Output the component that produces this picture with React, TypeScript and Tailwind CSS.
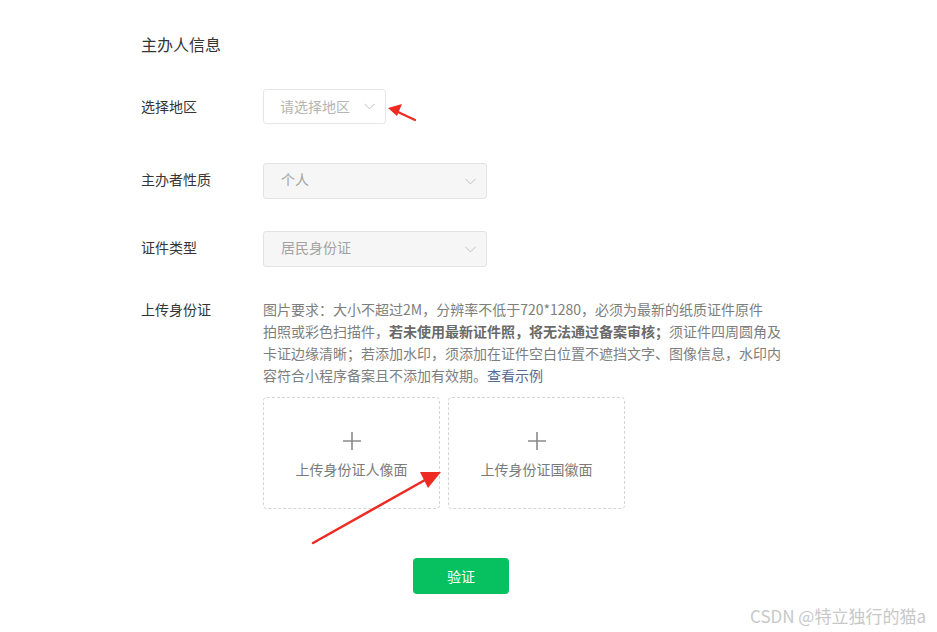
import { ChevronDown } from "lucide-react";

const font = { fontFamily: '"Noto Sans CJK SC", "Noto Sans", sans-serif' };

function Chevron() {
  return <ChevronDown size={19} strokeWidth={1.1} className="text-[#b8b8b8]" />;
}

function UploadBox({ label }: { label: string }) {
  return (
    <div className="flex h-[112px] w-[177px] flex-col items-center justify-center rounded border border-dashed border-[#d5d5d5]">
      <svg width="20" height="20" viewBox="0 0 20 20" className="mt-[4px]">
        <path d="M10 1v18M1 10h18" stroke="#8a8a8a" strokeWidth="1.6" />
      </svg>
      <span className="mt-[8px] text-[14px] text-[#7a7a7a]">{label}</span>
    </div>
  );
}

export default function App() {
  return (
    <div className="relative h-[632px] w-[937px] overflow-hidden bg-white" style={font}>
      <div className="pl-[141px] pt-[33px] text-[14px] text-[#353535]">
        <h2 className="text-[16px] leading-[22px] font-normal">主办人信息</h2>

        {/* Region */}
        <div className="mt-[34px] flex items-center">
          <span className="w-[122px]">选择地区</span>
          <div className="flex h-[35px] w-[123px] items-center justify-between rounded-[3px] border border-[#e6e6e6] bg-white pl-[16px] pr-[6px]">
            <span className="text-[#b5b5b5]">请选择地区</span>
            <Chevron />
          </div>
        </div>

        {/* Type */}
        <div className="mt-[39px] flex items-center">
          <span className="w-[122px] -mt-[3px]">主办者性质</span>
          <div className="flex h-[36px] w-[224px] items-center justify-between rounded-[3px] border border-[#e3e3e3] bg-[#f5f6f5] pl-[17px] pr-[6px]">
            <span className="-mt-[3px] text-[#a3a3a3]">个人</span>
            <Chevron />
          </div>
        </div>

        {/* ID type */}
        <div className="mt-[32px] flex items-center">
          <span className="w-[122px] -mt-[3px]">证件类型</span>
          <div className="flex h-[36px] w-[224px] items-center justify-between rounded-[3px] border border-[#e3e3e3] bg-[#f5f6f5] pl-[17px] pr-[6px]">
            <span className="-mt-[3px] text-[#a3a3a3]">居民身份证</span>
            <Chevron />
          </div>
        </div>

        {/* Upload */}
        <div className="mt-[31px] flex items-start">
          <span className="w-[122px] leading-[22px]">上传身份证</span>
          <div>
            <p className="whitespace-nowrap text-[14px] leading-[22px] text-[#7e7e7e]">
              图片要求：大小不超过2M，分辨率不低于720*1280，必须为最新的纸质证件原件
              <br />
              拍照或彩色扫描件，<b className="font-bold text-[#6a6a6a]">若未使用最新证件照，将无法通过备案审核；</b>须证件四周圆角及
              <br />
              卡证边缘清晰；若添加水印，须添加在证件空白位置不遮挡文字、图像信息，水印内
              <br />
              容符合小程序备案且不添加有效期。<span className="text-[#576b95]">查看示例</span>
            </p>
            <div className="mt-[11px] flex gap-[8px]">
              <UploadBox label="上传身份证人像面" />
              <UploadBox label="上传身份证国徽面" />
            </div>
          </div>
        </div>

        <div className="mt-[49px] pl-[272px]">
          <button className="h-[36px] w-[96px] rounded-[4px] bg-[#07c160] text-[14px] text-white">
            验证
          </button>
        </div>
      </div>

      {/* annotation arrows */}
      <svg className="pointer-events-none absolute left-0 top-0" width="937" height="632">
        <path d="M415 120 L398 112" stroke="#ee2b22" strokeWidth="2.2" strokeLinecap="round" />
        <path d="M388 108 L402 104 L397 116 Z" fill="#ee2b22" />
        <path d="M313 543 L425 480" stroke="#ee2b22" strokeWidth="2.5" strokeLinecap="round" />
        <path d="M441 472 L420 472 L428 488 Z" fill="#ee2b22" />
      </svg>

      <span className="absolute left-[750px] top-[603px] text-[17px] text-[#c8c8c8]">
        CSDN @特立独行的猫a
      </span>
    </div>
  );
}
